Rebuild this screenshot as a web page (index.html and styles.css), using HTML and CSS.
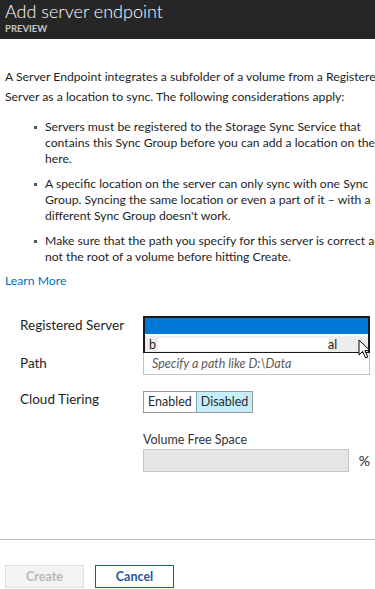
FILE: index.html
```html
<!DOCTYPE html>
<html lang="en">
<head>
<meta charset="UTF-8">
<meta name="viewport" content="width=device-width, initial-scale=1.0">
<title>Add server endpoint</title>
<link rel="stylesheet" href="styles.css">
</head>
<body>

<div class="blade">
    <header class="blade-header">
        <h1 class="blade-title">Add server endpoint</h1>
        <div class="blade-subtitle">PREVIEW</div>
    </header>

    <main class="blade-content">
        <p class="intro">A Server Endpoint integrates a subfolder of a volume from a Registered<br>Server as a location to sync. The following considerations apply:</p>
        <ul class="notes">
            <li>Servers must be registered to the Storage Sync Service that<br>contains this Sync Group before you can add a location on their server<br>here.</li>
            <li>A specific location on the server can only sync with one Sync<br>Group. Syncing the same location or even a part of it &ndash; with a<br>different Sync Group doesn't work.</li>
            <li>Make sure that the path you specify for this server is correct and<br>not the root of a volume before hitting Create.</li>
        </ul>
        <a class="learn-more" href="#">Learn More</a>

        <form class="endpoint-form">
            <div class="field-row server-row">
                <label class="field-label">Registered Server</label>
                <div class="server-select">
                    <div class="select-current"></div>
                    <div class="select-option">
                        <span>b</span><span class="redacted"></span><span>al</span>
                    </div>
                    <svg class="cursor" width="14" height="21" viewBox="0 0 14 21">
                        <path d="M1 1 L1 16 L4.6 12.4 L7.6 19 L9.8 18 L6.9 11.6 L12 11.6 Z" fill="#fff" stroke="#000" stroke-width="1" stroke-linejoin="round"/>
                    </svg>
                </div>
            </div>
            <div class="field-row path-row">
                <label class="field-label">Path</label>
                <input class="path-input" type="text" placeholder="Specify a path like D:\Data">
            </div>
            <div class="field-row tiering-row">
                <label class="field-label">Cloud Tiering</label>
                <div class="toggle">
                    <span class="toggle-option">Enabled</span>
                    <span class="toggle-option selected">Disabled</span>
                </div>
            </div>
            <div class="free-space">
                <div class="free-space-label">Volume Free Space</div>
                <div class="free-space-field">
                    <div class="free-space-box"></div>
                    <span class="percent">%</span>
                </div>
            </div>
        </form>
    </main>

    <footer class="blade-footer">
        <button class="btn btn-create" disabled>Create</button>
        <button class="btn btn-cancel">Cancel</button>
    </footer>
</div>

</body>
</html>
```

FILE: styles.css
```css
html, body {
    margin: 0;
    overflow: hidden;
}
body {
    font-family: Lato, "Open Sans", sans-serif;
    color: #1e1e1e;
    background: #fff;
}
.blade {
    display: flex;
    flex-direction: column;
    height: 589px;
    width: 375px;
}
.blade-header {
    background: #262626;
    color: #fff;
    height: 39px;
    padding: 1px 5px 0;
    box-sizing: border-box;
}
.blade-title {
    margin: 0;
    font-size: 18px;
    font-weight: 300;
    line-height: 21px;
    white-space: nowrap;
}
.blade-subtitle {
    font-size: 9.5px;
    font-weight: 700;
    color: #c4c4c4;
    line-height: 11px;
    margin-top: 1px;
}
.blade-content {
    padding: 0 5px;
    font-size: 12.2px;
}
.intro {
    margin: 28px 0 0;
    line-height: 20px;
    white-space: nowrap;
}
.notes {
    margin: 12px 0 0;
    padding-left: 40px;
    line-height: 16px;
    white-space: nowrap;
    list-style: none;
}
.notes li {
    position: relative;
    margin-bottom: 9px;
}
.notes li:last-child {
    margin-bottom: 0;
}
.notes li::before {
    content: "";
    position: absolute;
    left: -11px;
    top: 7px;
    width: 3px;
    height: 3px;
    background: #555;
}
.learn-more {
    display: block;
    color: #0072c6;
    text-decoration: none;
    line-height: 18px;
    margin-top: 7px;
}
.endpoint-form {
    padding-left: 15px;
    margin-top: 26px;
}
.field-row {
    display: flex;
    align-items: center;
}
.server-row {
    align-items: flex-start;
}
.field-label {
    width: 123px;
    flex: none;
    font-size: 13.5px;
    line-height: 18px;
}
.server-select {
    position: relative;
    width: 229px;
    height: 37px;
    border: 2px solid #1a1a1a;
    box-sizing: border-box;
}
.select-current {
    height: 16px;
    background: #0078d7;
}
.select-option {
    display: flex;
    align-items: center;
    height: 16px;
    margin-top: 2px;
    padding-left: 4px;
    background: #eeeeee;
    font-size: 12.5px;
}
.redacted {
    width: 170px;
    height: 13px;
    margin-left: 2px;
    background: #fff;
}
.cursor {
    position: absolute;
    right: -4px;
    top: 21px;
}
.path-input {
    width: 229px;
    height: 23px;
    margin: -1px 0 0;
    padding: 0 8px;
    box-sizing: border-box;
    border: 1px solid #c4c4c4;
    font-family: inherit;
    font-size: 12.5px;
}
.path-input::placeholder {
    color: #5a5a5a;
    font-style: italic;
}
.path-row .field-label {
    margin-top: -3px;
}
.tiering-row {
    margin-top: 16px;
}
.tiering-row .field-label {
    margin-top: -6px;
}
.toggle {
    display: flex;
    border: 1px solid #9a9a9a;
    height: 22px;
    box-sizing: border-box;
}
.toggle-option {
    padding: 0 4px;
    line-height: 20px;
    font-size: 12.5px;
    color: #2b2b2b;
}
.toggle-option.selected {
    background: #c5eefa;
    border-left: 1px solid #8aa9b6;
}
.free-space {
    margin-left: 123px;
    margin-top: 19px;
}
.free-space-label {
    font-size: 12.5px;
    line-height: 16px;
    color: #333;
}
.free-space-field {
    display: flex;
    align-items: center;
    margin-top: 1px;
}
.free-space-box {
    width: 209px;
    height: 23px;
    box-sizing: border-box;
    background: #e6e6e6;
    border: 1px solid #c6c6c6;
}
.percent {
    margin-left: 10px;
    font-size: 14px;
}
.blade-footer {
    margin-top: auto;
    border-top: 1px solid #bdbdbd;
    padding: 25px 5px 1px;
    display: flex;
    gap: 11px;
}
.btn {
    width: 79px;
    height: 23px;
    box-sizing: border-box;
    font-family: inherit;
    font-size: 12.5px;
    font-weight: 700;
    padding: 0;
}
.btn-create {
    background: #f3f3f3;
    border: 1px solid #e0e0e0;
    color: #b8b8b8;
}
.btn-cancel {
    background: #fff;
    border: 1px solid #1d5aa8;
    color: #1b57a5;
    cursor: pointer;
}
```
